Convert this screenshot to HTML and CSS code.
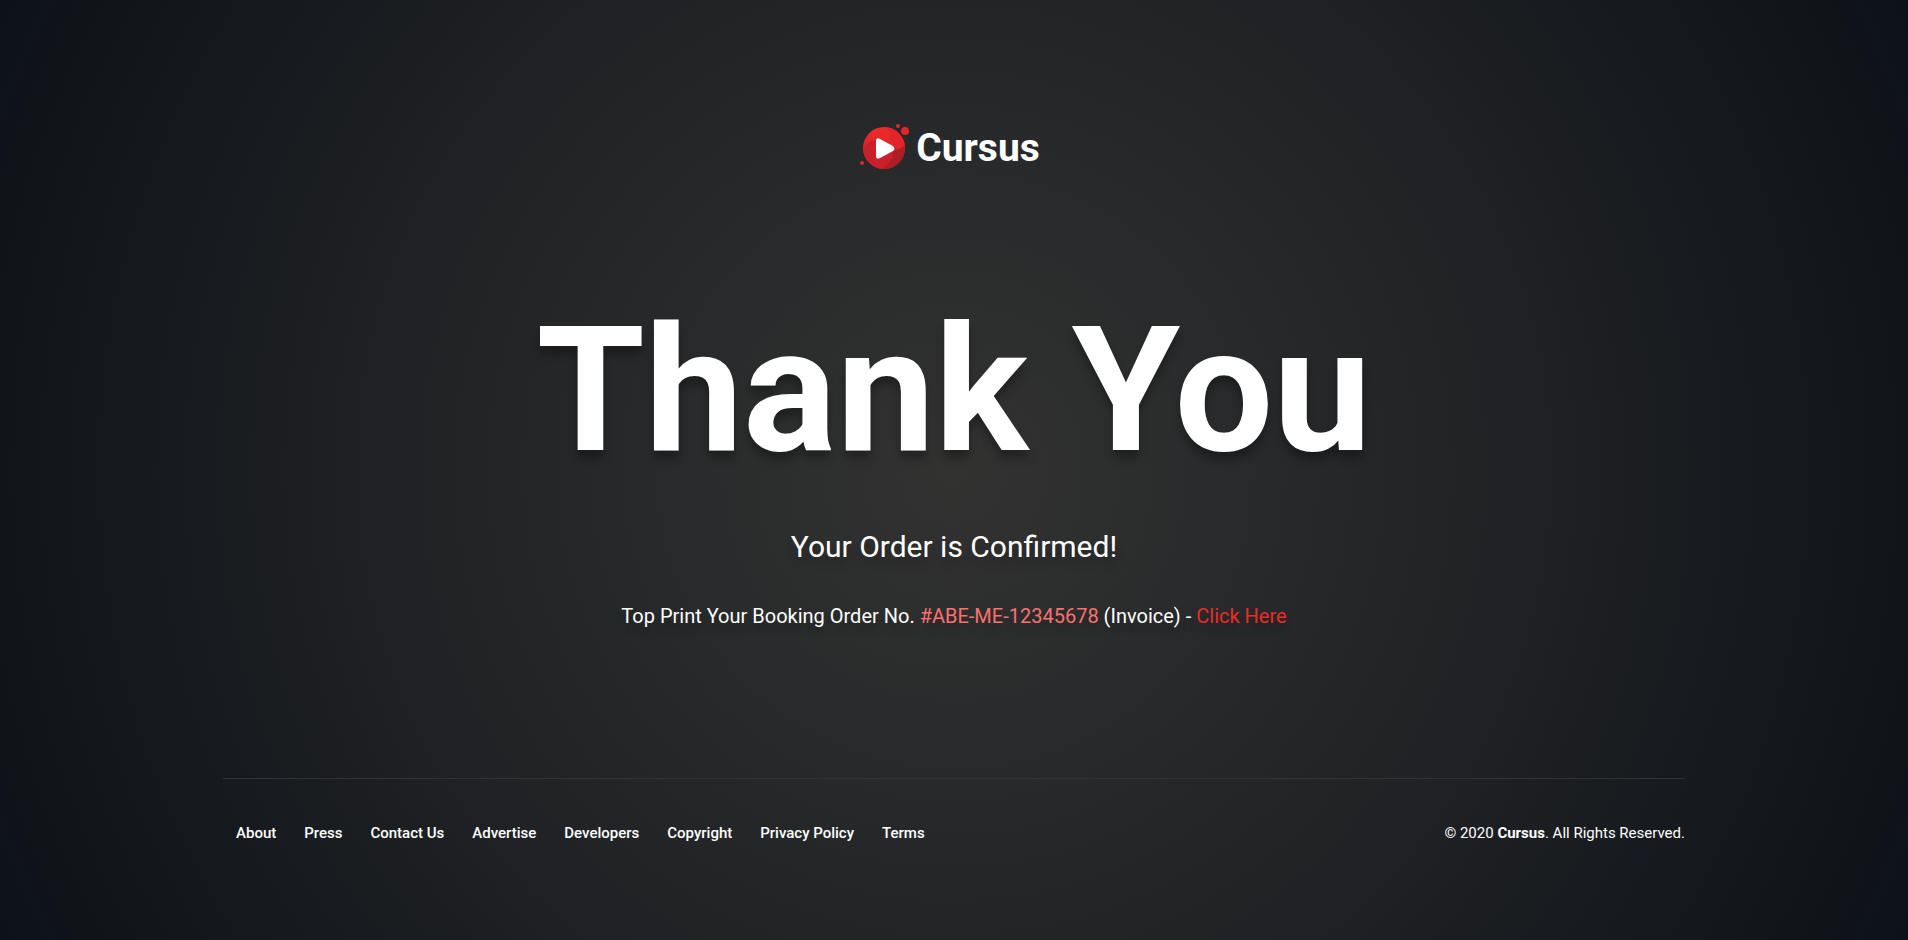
FILE: index.html
```html
<!DOCTYPE html>
<html lang="en">
<head>
<meta charset="utf-8">
<meta name="viewport" content="width=device-width, initial-scale=1">
<title>Cursus - Thank You</title>
<link rel="stylesheet" href="styles.css">
</head>
<body class="page">
<main class="thanks">
  <a class="logo" href="#">
    <svg class="logo-mark" width="50" height="46" viewBox="0 0 50 46" aria-hidden="true">
      <defs>
        <linearGradient id="disc" x1="0" y1="0" x2="0" y2="1">
          <stop offset="0" stop-color="#ef2b29"/>
          <stop offset="1" stop-color="#c61f27"/>
        </linearGradient>
        <clipPath id="round"><circle cx="24" cy="23" r="21"/></clipPath>
      </defs>
      <circle cx="24" cy="23" r="21" fill="url(#disc)"/>
      <g clip-path="url(#round)">
        <path d="M24 1C31 7 34 16 31 24H46V1Z" fill="#e52429"/>
        <path d="M3 24C6 18 11 15 17 15V32L36 23C36 32 31 41 20 46H0Z" fill="#c92029"/>
        <path d="M46 19C42 23 38 25 33 25C34 33 29 40 19 46H46Z" fill="#b01e25"/>
      </g>
      <path d="M16 16Q16 12 20 14L33 21Q36 24 33 26L20 33Q16 35 16 31Z" fill="#fff"/>
      <circle cx="38" cy="1" r="2" fill="#e52629"/>
      <circle cx="45" cy="6" r="4" fill="#e52629"/>
      <circle cx="2" cy="38" r="2" fill="#e52629"/>
    </svg>
    <span class="logo-name">Cursus</span>
  </a>
  <h1 class="title">Thank You</h1>
  <h2 class="subtitle">Your Order is Confirmed!</h2>
  <p class="order">Top Print Your Booking Order No. <span class="order-no">#ABE-ME-12345678</span> (Invoice) - <a class="order-link" href="#">Click Here</a></p>
</main>
<footer class="footer">
  <nav class="footer-nav">
    <a href="#">About</a>
    <a href="#">Press</a>
    <a href="#">Contact Us</a>
    <a href="#">Advertise</a>
    <a href="#">Developers</a>
    <a href="#">Copyright</a>
    <a href="#">Privacy Policy</a>
    <a href="#">Terms</a>
  </nav>
  <p class="copyright">© 2020 <strong>Cursus</strong>. All Rights Reserved.</p>
</footer>
</body>
</html>
```
FILE: styles.css
```css
* {
  box-sizing: border-box;
}

.page {
  margin: 0;
  min-height: 100vh;
  padding: 125px 24px 0;
  font-family: Roboto, "Liberation Sans", sans-serif;
  color: #fff;
  background: radial-gradient(circle farthest-corner at 50% 50%, #323231 0%, #2d2e2e 14%, #252628 39%, #1f2124 55%, #181b1f 71%, #111519 90%, #0d111a 100%) no-repeat;
}

.thanks {
  display: flex;
  flex-direction: column;
  align-items: center;
  text-align: center;
}

.logo {
  display: flex;
  gap: 6px;
  align-items: center;
  padding-right: 8px;
  color: #fff;
  text-decoration: none;
}

.logo-mark {
  overflow: visible;
}

.logo-name {
  font-size: 39px;
  line-height: 46px;
  font-weight: 700;
}

.title {
  margin: 114px 0 0;
  font-size: 175px;
  line-height: 212px;
  font-weight: 700;
  text-shadow: 0 8px 8px rgba(0, 0, 0, 0.3);
}

.subtitle {
  margin: 30px 0 0;
  font-size: 30px;
  line-height: 40px;
  font-weight: 400;
  text-shadow: 0 8px 8px rgba(0, 0, 0, 0.2);
}

.order {
  margin: 35px 0 0;
  font-size: 20px;
  line-height: 28px;
  text-shadow: 0 8px 8px rgba(0, 0, 0, 0.2);
}

.order-no {
  color: #ff7070;
}

.order-link {
  color: #ed2a26;
  text-decoration: none;
}

.footer {
  display: flex;
  flex-wrap: wrap;
  justify-content: space-between;
  align-items: center;
  gap: 16px;
  max-width: 1462px;
  margin: 148px auto 0;
  padding: 40px 0;
  border-top: 1px solid #303234;
}

.footer-nav {
  display: flex;
  flex-wrap: wrap;
  gap: 28px;
  padding-left: 13px;
}

.footer-nav a {
  color: #fff;
  font-size: 15px;
  line-height: 28px;
  font-weight: 500;
  text-decoration: none;
}

.copyright {
  margin: 0;
  font-size: 15px;
  line-height: 28px;
}

.copyright strong {
  font-weight: 700;
}
```
